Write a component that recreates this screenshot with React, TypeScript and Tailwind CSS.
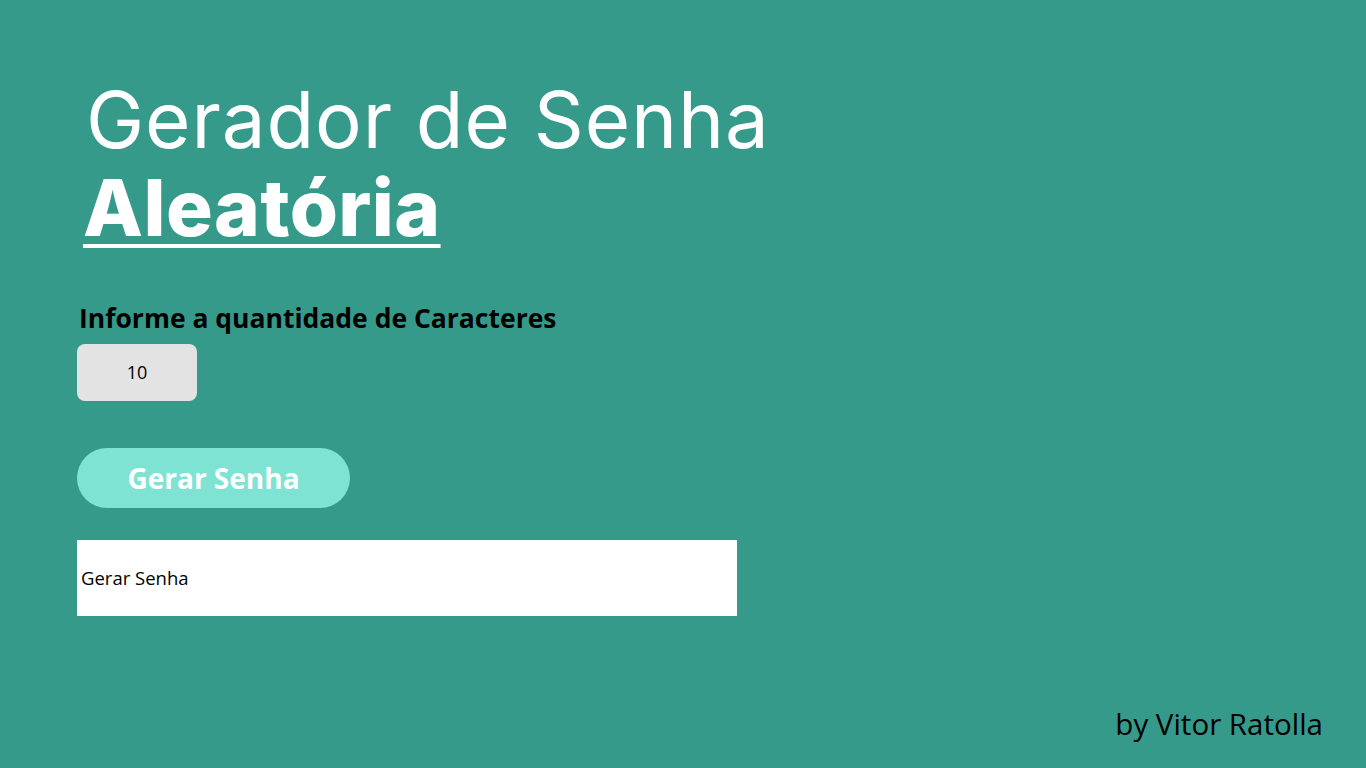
export default function App() {
  return (
    <div className="min-h-screen w-full bg-[#369a8a] flex flex-col font-['Open_Sans',sans-serif]">
      <main className="pl-[77px] pt-[76px]">
        <h1 className="font-['Inter',sans-serif] text-white text-[78px] leading-[88px] ml-[9px] font-normal tracking-[0.9px]">
          Gerador de Senha
        </h1>
        <h2 className="font-['Inter',sans-serif] text-white text-[78px] leading-[88px] ml-[6px] font-extrabold underline decoration-[4px] underline-offset-[8px] tracking-[0.4px]">
          Aleatória
        </h2>

        <label className="block mt-[50px] ml-[2px] text-[26.5px] leading-[32px] font-bold text-black">
          Informe a quantidade de Caracteres
        </label>
        <div className="mt-[10px] w-[120px] h-[57px] rounded-[8px] bg-[#e3e3e3] flex items-center justify-center text-[18px] text-black">
          10
        </div>

        <button className="mt-[47px] w-[273px] h-[60px] rounded-full bg-[#7fe3d4] text-white text-[28px] font-bold flex items-center justify-center">
          Gerar Senha
        </button>

        <div className="mt-[32px] w-[660px] h-[76px] bg-white flex items-center pl-[4px] text-[18.5px] text-black">
          Gerar Senha
        </div>
      </main>

      <footer className="mt-auto flex justify-end pr-[43px] pb-[25px]">
        <span className="text-[29.5px] leading-[38px] text-black">by Vitor Ratolla</span>
      </footer>
    </div>
  )
}
